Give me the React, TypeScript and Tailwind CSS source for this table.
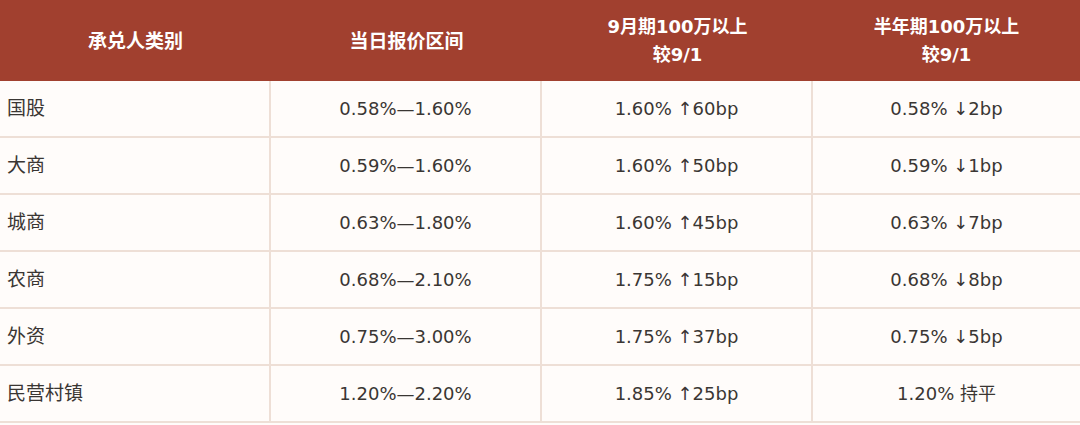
const rows = [
  ["国股", "0.58%—1.60%", "1.60% ↑60bp", "0.58% ↓2bp"],
  ["大商", "0.59%—1.60%", "1.60% ↑50bp", "0.59% ↓1bp"],
  ["城商", "0.63%—1.80%", "1.60% ↑45bp", "0.63% ↓7bp"],
  ["农商", "0.68%—2.10%", "1.75% ↑15bp", "0.68% ↓8bp"],
  ["外资", "0.75%—3.00%", "1.75% ↑37bp", "0.75% ↓5bp"],
  ["民营村镇", "1.20%—2.20%", "1.85% ↑25bp", "1.20% 持平"],
];

const App = () => {
  return (
    <div
      className="w-[1080px] h-[425px] bg-[#fffcfa] overflow-hidden"
      style={{ fontFamily: '"DejaVu Sans", "Noto Sans CJK SC", sans-serif' }}
    >
      <div className="grid grid-cols-[271px_271px_271px_267px] h-[81px] bg-[#a1402f] text-white font-bold text-[18px] leading-[28px]">
        <div className="flex items-center justify-center text-[19px]">承兑人类别</div>
        <div className="flex items-center justify-center text-[19px]">当日报价区间</div>
        <div className="flex flex-col items-center justify-center">
          <span>9月期100万以上</span>
          <span>较9/1</span>
        </div>
        <div className="flex flex-col items-center justify-center">
          <span>半年期100万以上</span>
          <span>较9/1</span>
        </div>
      </div>
      {rows.map((r, i) => (
        <div
          key={i}
          className="grid grid-cols-[271px_271px_271px_267px] h-[57px] border-b-2 border-[#eedfd6] text-[#3a3633] text-[18px]"
        >
          <div className="flex items-center pl-[7px] text-[19px] border-r-2 border-[#eedfd6]">{r[0]}</div>
          <div className="flex items-center justify-center border-r-2 border-[#eedfd6]">{r[1]}</div>
          <div className="flex items-center justify-center border-r-2 border-[#eedfd6]">{r[2]}</div>
          <div className="flex items-center justify-center">{r[3]}</div>
        </div>
      ))}
    </div>
  );
};

export default App;
